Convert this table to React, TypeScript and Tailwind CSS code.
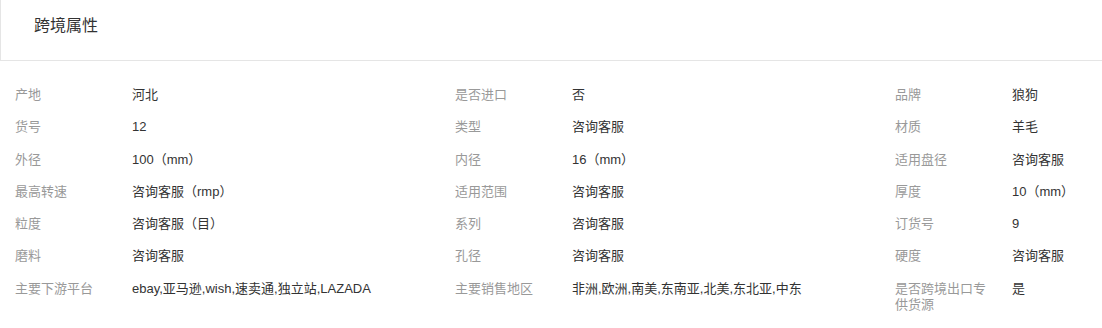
import React from "react";

type Item = { label: string; value: string };

const rows: Item[][] = [
  [
    { label: "产地", value: "河北" },
    { label: "是否进口", value: "否" },
    { label: "品牌", value: "狼狗" },
  ],
  [
    { label: "货号", value: "12" },
    { label: "类型", value: "咨询客服" },
    { label: "材质", value: "羊毛" },
  ],
  [
    { label: "外径", value: "100（mm）" },
    { label: "内径", value: "16（mm）" },
    { label: "适用盘径", value: "咨询客服" },
  ],
  [
    { label: "最高转速", value: "咨询客服（rmp）" },
    { label: "适用范围", value: "咨询客服" },
    { label: "厚度", value: "10（mm）" },
  ],
  [
    { label: "粒度", value: "咨询客服（目）" },
    { label: "系列", value: "咨询客服" },
    { label: "订货号", value: "9" },
  ],
  [
    { label: "磨料", value: "咨询客服" },
    { label: "孔径", value: "咨询客服" },
    { label: "硬度", value: "咨询客服" },
  ],
  [
    { label: "主要下游平台", value: "ebay,亚马逊,wish,速卖通,独立站,LAZADA" },
    { label: "主要销售地区", value: "非洲,欧洲,南美,东南亚,北美,东北亚,中东" },
    { label: "是否跨境出口专供货源", value: "是" },
  ],
];

export default function App() {
  return (
    <div
      className="w-[1102px] h-[328px] bg-white overflow-hidden"
      style={{ fontFamily: '"Liberation Sans", Arial, "Noto Sans CJK SC", sans-serif' }}
    >
      <div className="h-[61px] border-l border-b border-[#e5e5e5]">
        <div className="pl-[33px] pt-[17px] text-[16px] leading-[18px] text-[#333]">跨境属性</div>
      </div>
      <div className="pt-[18px] pl-[15px]">
        {rows.map((row, i) => (
          <div key={i} className="grid grid-cols-[440px_440px_1fr]">
            {row.map((it, j) => (
              <div key={j} className="flex py-2 text-[13px] leading-[1.25]">
                <div className="w-[117px] shrink-0 pr-[17px] text-[#999]">{it.label}</div>
                <div className="text-[#333] whitespace-nowrap">{it.value}</div>
              </div>
            ))}
          </div>
        ))}
      </div>
    </div>
  );
}
